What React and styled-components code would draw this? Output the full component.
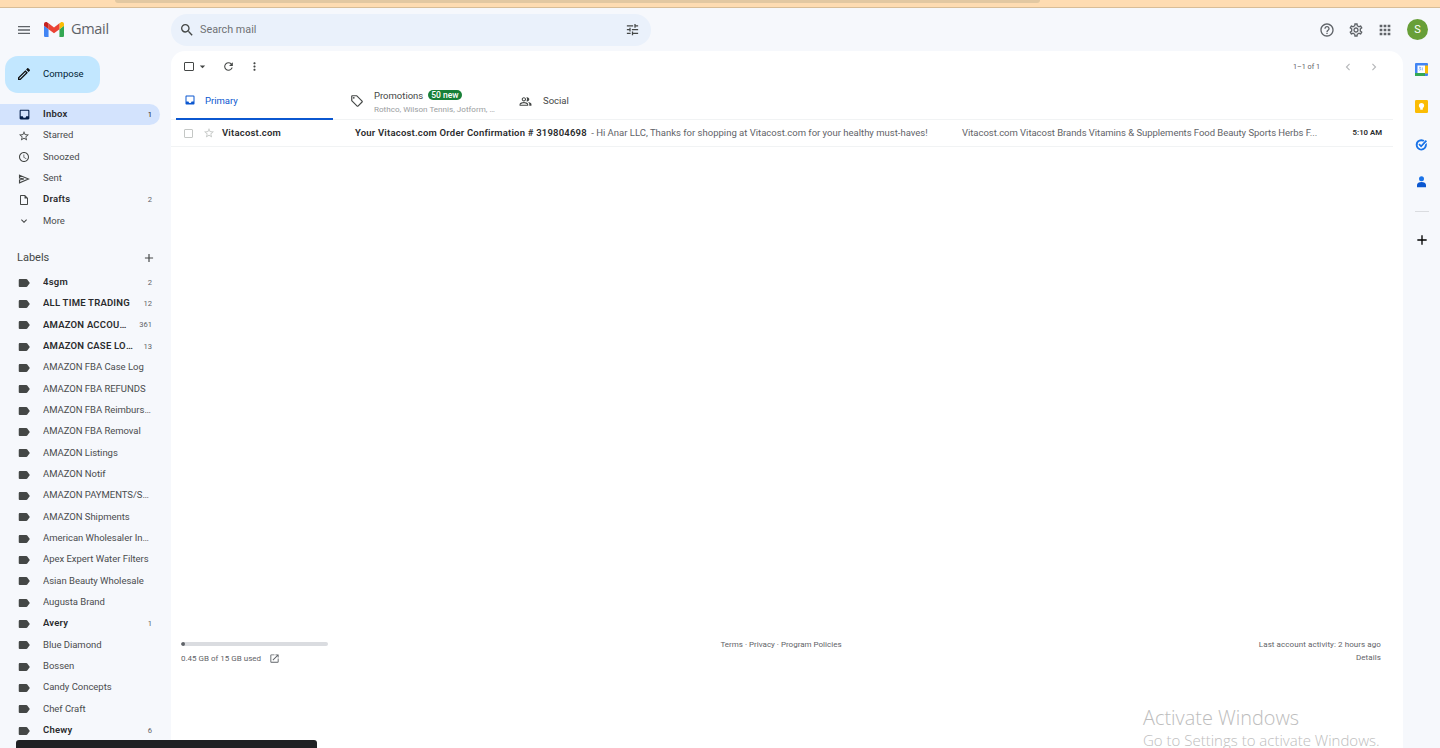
import React from 'react';
import styled, { createGlobalStyle } from 'styled-components';
import {
  MdMenu, MdSearch, MdTune, MdHelpOutline, MdOutlineSettings, MdApps, MdRefresh, MdMoreVert,
  MdStarBorder, MdAccessTime, MdOutlineInsertDriveFile, MdExpandMore, MdLabel, MdAdd, MdOutlineLocalOffer,
  MdOutlinePeopleAlt, MdInbox, MdOpenInNew, MdChevronLeft, MdChevronRight, MdArrowDropDown, MdOutlineEdit,
} from 'react-icons/md';

const Global = createGlobalStyle`
  html, body { margin: 0; padding: 0; height: 100%; overflow: hidden; }
  body { background: #f6f8fc; font-family: Roboto, "Liberation Sans", sans-serif; color: #444746; }
  * { box-sizing: border-box; }
`;

const Page = styled.div`
  position: relative;
  width: 1440px;
  height: 748px;
  display: flex;
  flex-direction: column;
  overflow: hidden;
`;
const BrowserStrip = styled.div`
  height: 8px;
  flex: none;
  background: #fedcb2;
  border-bottom: 1px solid #d8bd97;
  padding: 0 400px 0 115px;
`;
const StripTab = styled.div`
  height: 3px;
  background: #e2c8a2;
  border-radius: 0 0 8px 8px;
`;
const TopBar = styled.header`
  height: 43px;
  flex: none;
  display: flex;
  align-items: center;
`;
const Brand = styled.div`
  width: 171px;
  flex: none;
  display: flex;
  align-items: center;
  padding-left: 16px;
  color: #5f6368;
`;
const LogoGap = styled.span`
  width: 12px;
  flex: none;
`;
const BrandName = styled.span`
  font-family: "Open Sans", Roboto, sans-serif;
  font-size: 14.5px;
  margin-left: 7px;
  margin-top: -2px;
  color: #5f6368;
  letter-spacing: -0.3px;
`;
const SearchBar = styled.div`
  width: 480px;
  height: 32px;
  background: #eaf1fb;
  border-radius: 16px;
  display: flex;
  align-items: center;
  padding: 0 11px 0 8px;
  color: #444746;
`;
const SearchText = styled.span`
  flex: 1;
  font-size: 10.8px;
  margin-left: 5px;
  color: #6f7275;
`;
const TopActions = styled.div`
  margin-left: auto;
  display: flex;
  align-items: center;
  padding-right: 12px;
  color: #5f6368;
`;
const TopIcon = styled.span`
  width: 29px;
  display: flex;
  justify-content: center;
`;
const Avatar = styled.span`
  width: 21px;
  height: 21px;
  margin-left: 8px;
  border-radius: 50%;
  background: #689f38;
  color: #fff;
  font-size: 11px;
  display: flex;
  align-items: center;
  justify-content: center;
`;
const Body = styled.div`
  flex: 1;
  display: flex;
  min-height: 0;
`;
const Sidebar = styled.aside`
  width: 171px;
  flex: none;
  padding-top: 5px;
  overflow: hidden;
`;
const Compose = styled.div`
  width: 95px;
  height: 37px;
  margin-left: 5px;
  margin-bottom: 11px;
  padding: 0 0 2px 11px;
  border-radius: 13px;
  background: #c2e7ff;
  color: #001d35;
  display: flex;
  align-items: center;
  font-size: 9.5px;
  gap: 11px;
`;
const Row = styled.div`
  width: 160px;
  height: 21.33px;
  display: flex;
  align-items: center;
  padding: 0 8px 0 18px;
  font-size: 9.5px;
  border-radius: 0 11px 11px 0;
  background: ${p => (p.$active ? '#d3e3fd' : 'transparent')};
  color: ${p => (p.$bold ? '#2a2b2d' : '#4a4c4e')};
  font-weight: ${p => (p.$bold ? 600 : 400)};
  letter-spacing: ${p => (p.$bold ? '0.22px' : '-0.03px')};
`;
const RowIcon = styled.span`
  width: 25px;
  flex: none;
  display: flex;
  color: ${p => (p.$active ? '#041e49' : '#444746')};
`;
const LabelGlyph = styled(MdLabel)`
  margin-left: -1px;
`;
const RowName = styled.span`
  flex: 1;
  min-width: 0;
  margin-top: -2px;
  overflow: hidden;
  white-space: nowrap;
  text-overflow: ellipsis;
`;
const RowCount = styled.span`
  flex: none;
  margin-left: 8px;
  margin-top: -1px;
  font-size: 7.6px;
  font-weight: 400;
  letter-spacing: 0;
  color: ${p => (p.$active ? '#202124' : '#5f6368')};
`;
const LabelsHead = styled.div`
  width: 160px;
  height: 22px;
  margin-top: 15px;
  margin-bottom: 3px;
  padding: 0 4px 0 17px;
  display: flex;
  align-items: center;
  justify-content: space-between;
  font-size: 11px;
  color: #444746;
`;
const Main = styled.main`
  width: 1232px;
  flex: none;
  background: #fff;
  border-radius: 14px 14px 0 0;
  display: flex;
  flex-direction: column;
`;
const Toolbar = styled.div`
  height: 31px;
  flex: none;
  display: flex;
  align-items: center;
  padding: 0 16px 0 13px;
  color: #444746;
`;
const Check = styled.span`
  display: block;
  flex: none;
  width: ${p => p.$size}px;
  height: ${p => p.$size}px;
  border: ${p => (p.$light ? '1px solid #c4c7c5' : '1.5px solid #444746')};
  border-radius: 1px;
`;
const ToolGroup = styled.span`
  display: flex;
  align-items: center;
  gap: ${p => p.$gap || 0}px;
  width: ${p => p.$w}px;
  flex: none;
`;
const Pager = styled.div`
  margin-left: auto;
  display: flex;
  align-items: center;
  color: #b6b8ba;
`;
const PagerText = styled.span`
  font-size: 7.2px;
  color: #5f6368;
  margin-right: 15px;
`;
const PagerButton = styled.span`
  width: 26px;
  display: flex;
  justify-content: center;
`;
const Tabs = styled.div`
  height: 38px;
  flex: none;
  display: flex;
  margin-right: 10px;
  border-bottom: 1px solid #f1f3f4;
`;
const Tab = styled.div`
  width: ${p => p.$w}px;
  margin-left: ${p => p.$ml || 0}px;
  flex: none;
  height: 38px;
  display: flex;
  align-items: center;
  padding-left: ${p => p.$pl}px;
  font-size: 9.5px;
  color: ${p => (p.$active ? '#0b57d0' : '#444746')};
  border-bottom: ${p => (p.$active ? '2px solid #0b57d0' : 'none')};
`;
const TabLabel = styled.span`
  margin-left: ${p => p.$ml}px;
  margin-top: ${p => (p.$up ? -2 : 0)}px;
`;
const TabStack = styled.div`
  display: flex;
  flex-direction: column;
  margin-left: 10px;
  margin-top: 1px;
  gap: 3px;
`;
const TabTop = styled.div`
  display: flex;
  align-items: center;
  gap: 5px;
`;
const Badge = styled.span`
  background: #188038;
  color: #fff;
  font-size: 8.5px;
  font-weight: 500;
  height: 10px;
  line-height: 10px;
  padding: 0 3px;
  border-radius: 5px;
`;
const TabSub = styled.span`
  font-size: 8.1px;
  color: #9a9da0;
  white-space: nowrap;
`;
const MailRow = styled.div`
  height: 27px;
  flex: none;
  margin-right: 10px;
  display: flex;
  align-items: center;
  border-bottom: 1px solid #f1f3f4;
  padding-left: 13px;
  font-size: 9.5px;
  white-space: nowrap;
  color: #5f6368;
`;
const StarBox = styled.span`
  display: flex;
  margin: 0 7px 0 10px;
  color: #c4c7c5;
`;
const Sender = styled.b`
  width: 133px;
  flex: none;
  margin-top: -2px;
  color: #2a2b2d;
  font-weight: 600;
  letter-spacing: 0.2px;
`;
const Subject = styled.b`
  margin-right: 2px;
  color: #2a2b2d;
  font-weight: 600;
  letter-spacing: 0.2px;
`;
const Snippet = styled.span`
  width: 607px;
  flex: none;
  margin-top: -2px;
`;
const Extra = styled.span`
  flex: 1;
  margin-top: -2px;
  letter-spacing: -0.04px;
`;
const Time = styled.b`
  font-size: 7.8px;
  font-weight: 600;
  margin-top: -2px;
  color: #2a2b2d;
  padding-right: 11px;
`;
const Footer = styled.footer`
  margin-top: auto;
  margin-bottom: 84px;
  display: grid;
  grid-template-columns: 1fr auto 1fr;
  padding: 0 22px 0 10px;
  font-size: 8px;
  color: #5f6368;
`;
const Storage = styled.div`
  width: 147px;
  padding-top: 4px;
`;
const Track = styled.div`
  height: 4px;
  background: #dadce0;
  border-radius: 2px;
  overflow: hidden;
`;
const Fill = styled.div`
  height: 4px;
  background: #5f6368;
  border-radius: 2px;
`;
const StorageText = styled.div`
  margin-top: 7px;
  display: flex;
  align-items: center;
  gap: 8px;
  white-space: nowrap;
`;
const Policies = styled.div`
  padding-top: 2px;
`;
const Activity = styled.div`
  text-align: right;
  line-height: 13px;
  letter-spacing: 0.08px;
`;
const Rail = styled.aside`
  flex: 1;
  display: flex;
  flex-direction: column;
  align-items: center;
`;
const RailItem = styled.span`
  height: 37.3px;
  display: flex;
  align-items: center;
  justify-content: center;
`;
const RailRule = styled.span`
  width: 14px;
  height: 1px;
  background: #dadce0;
  margin: 11px 0 20px;
`;
const Toast = styled.div`
  position: absolute;
  left: 16px;
  bottom: 0;
  width: 301px;
  height: 8px;
  background: #202124;
  border-radius: 3px 3px 0 0;
`;
const Watermark = styled.div`
  position: absolute;
  left: 1143px;
  top: 705px;
  font-family: "Open Sans", sans-serif;
  font-weight: 300;
  color: #bdbdbd;
  white-space: nowrap;
  pointer-events: none;
`;
const WatermarkTitle = styled.div`
  font-size: 19.9px;
  line-height: 26px;
`;
const WatermarkSub = styled.div`
  font-size: 15px;
  line-height: 19px;
`;

const GmailLogo = () => (
  <svg width="20" height="15" viewBox="52 42 88 66">
    <path fill="#4285f4" d="M58 108h14V74L52 59v43c0 3.32 2.69 6 6 6" />
    <path fill="#34a853" d="M120 108h14c3.32 0 6-2.69 6-6V59l-20 15" />
    <path fill="#fbbc04" d="M120 48v26l20-15v-8c0-7.42-8.47-11.65-14.4-7.2" />
    <path fill="#ea4335" d="M72 74V48l24 18 24-18v26L96 92" />
    <path fill="#c5221f" d="M52 51v8l20 15V48l-5.6-4.2c-5.94-4.45-14.4-.22-14.4 7.2" />
  </svg>
);
const SentIcon = () => (
  <svg width="12" height="12" viewBox="0 0 12 12" fill="none" stroke="currentColor" strokeWidth="1.1">
    <path d="M1.5 2.2 10.5 6 1.5 9.8V7L6 6 1.5 5Z" />
  </svg>
);
const CalendarIcon = () => (
  <svg width="13" height="13" viewBox="0 0 13 13">
    <rect width="13" height="13" rx="1" fill="#4285f4" />
    <rect x="10" y="2.5" width="3" height="8" fill="#fbbc04" />
    <rect y="10" width="10" height="3" fill="#34a853" />
    <rect x="2.5" y="2.5" width="7.5" height="7.5" fill="#fff" />
    <path d="M4 4.3h1.6L4.8 5.6c.7 0 .9.4.9.8 0 .5-.4.8-.9.8-.4 0-.7-.2-.9-.5M7.3 4.4v3" fill="none" stroke="#4285f4" strokeWidth=".6" />
  </svg>
);
const KeepIcon = () => (
  <svg width="13" height="13" viewBox="0 0 13 13">
    <rect width="13" height="13" rx="1.2" fill="#fbbc04" />
    <circle cx="6.5" cy="5.5" r="2.6" fill="#fff" />
    <rect x="5.2" y="7.5" width="2.6" height="2.2" fill="#fff" />
  </svg>
);
const TasksIcon = () => (
  <svg width="13" height="13" viewBox="0 0 13 13" fill="none">
    <circle cx="6.3" cy="6.8" r="4.6" stroke="#1a73e8" strokeWidth="2" />
    <path d="M3.8 6.3 6 8.6 12 2.2" stroke="#fff" strokeWidth="3.4" />
    <path d="M4 6.2 6.1 8.3 11.4 2.6" stroke="#1a73e8" strokeWidth="1.8" />
  </svg>
);
const ContactsIcon = () => (
  <svg width="11" height="12" viewBox="0 0 11 12">
    <circle cx="5.5" cy="2.8" r="2.5" fill="#1a73e8" />
    <path d="M1 9c0-2 2-3 4.5-3S10 7 10 9v2.2H1Z" fill="#0b57d0" />
  </svg>
);

const nav = [
  { name: 'Starred', Icon: MdStarBorder },
  { name: 'Snoozed', Icon: MdAccessTime },
  { name: 'Sent', Icon: SentIcon },
  { name: 'Drafts', Icon: MdOutlineInsertDriveFile, count: 2, bold: true },
  { name: 'More', Icon: MdExpandMore },
];
const labels = [
  ['4sgm', 2, 1], ['ALL TIME TRADING', 12, 1], ['AMAZON ACCOUNT HEALTH', 361, 1], ['AMAZON CASE LOG FILES', 13, 1],
  ['AMAZON FBA Case Log'], ['AMAZON FBA REFUNDS'], ['AMAZON FBA Reimbursements'], ['AMAZON FBA Removal'],
  ['AMAZON Listings'], ['AMAZON Notif'], ['AMAZON PAYMENTS/SETTLEMENTS'], ['AMAZON Shipments'],
  ['American Wholesaler Inc LLC'], ['Apex Expert Water Filters'], ['Asian Beauty Wholesale'], ['Augusta Brand'],
  ['Avery', 1, 1], ['Blue Diamond'], ['Bossen'], ['Candy Concepts'], ['Chef Craft'], ['Chewy', 6, 1],
];

export default function App() {
  return (
    <Page>
      <Global />
      <BrowserStrip><StripTab /></BrowserStrip>
      <TopBar>
        <Brand>
          <MdMenu size={16} />
          <LogoGap />
          <GmailLogo />
          <BrandName>Gmail</BrandName>
        </Brand>
        <SearchBar>
          <MdSearch size={16} />
          <SearchText>Search mail</SearchText>
          <MdTune size={15} />
        </SearchBar>
        <TopActions>
          <TopIcon><MdHelpOutline size={16} /></TopIcon>
          <TopIcon><MdOutlineSettings size={16} /></TopIcon>
          <TopIcon><MdApps size={16} /></TopIcon>
          <Avatar>S</Avatar>
        </TopActions>
      </TopBar>
      <Body>
        <Sidebar>
          <Compose><MdOutlineEdit size={16} color="#111" />Compose</Compose>
          <Row $active $bold>
            <RowIcon $active><MdInbox size={13} /></RowIcon>
            <RowName>Inbox</RowName>
            <RowCount $active>1</RowCount>
          </Row>
          {nav.map(({ name, Icon, count, bold }) => (
            <Row key={name} $bold={bold}>
              <RowIcon><Icon size={12} /></RowIcon>
              <RowName>{name}</RowName>
              {count && <RowCount>{count}</RowCount>}
            </Row>
          ))}
          <LabelsHead>Labels<MdAdd size={14} /></LabelsHead>
          {labels.map(([name, count, bold]) => (
            <Row key={name} $bold={bold}>
              <RowIcon><LabelGlyph size={14} /></RowIcon>
              <RowName>{name}</RowName>
              {count && <RowCount>{count}</RowCount>}
            </Row>
          ))}
        </Sidebar>
        <Main>
          <Toolbar>
            <ToolGroup $w={38} $gap={2}><Check $size={9.5} /><MdArrowDropDown size={13} /></ToolGroup>
            <ToolGroup $w={26}><MdRefresh size={13} /></ToolGroup>
            <ToolGroup $w={20}><MdMoreVert size={13} /></ToolGroup>
            <Pager>
              <PagerText>1–1 of 1</PagerText>
              <PagerButton><MdChevronLeft size={14} /></PagerButton>
              <PagerButton><MdChevronRight size={14} /></PagerButton>
            </Pager>
          </Toolbar>
          <Tabs>
            <Tab $active $w={157} $ml={5} $pl={8}>
              <MdInbox size={12} />
              <TabLabel $ml={9}>Primary</TabLabel>
            </Tab>
            <Tab $w={170} $pl={17}>
              <MdOutlineLocalOffer size={14} />
              <TabStack>
                <TabTop>Promotions<Badge>50 new</Badge></TabTop>
                <TabSub>Rothco, Wilson Tennis, Jotform, …</TabSub>
              </TabStack>
            </Tab>
            <Tab $w={200} $pl={16}>
              <MdOutlinePeopleAlt size={13} />
              <TabLabel $ml={11} $up>Social</TabLabel>
            </Tab>
          </Tabs>
          <MailRow>
            <Check $size={9} $light />
            <StarBox><MdStarBorder size={12} /></StarBox>
            <Sender>Vitacost.com</Sender>
            <Snippet><Subject>Your Vitacost.com Order Confirmation # 319804698</Subject> - Hi Anar LLC, Thanks for shopping at Vitacost.com for your healthy must-haves!</Snippet>
            <Extra>Vitacost.com Vitacost Brands Vitamins &amp; Supplements Food Beauty Sports Herbs F...</Extra>
            <Time>5:10 AM</Time>
          </MailRow>
          <Footer>
            <Storage>
              <Track><Fill style={{ width: `${(0.45 / 15) * 100}%` }} /></Track>
              <StorageText>0.45 GB of 15 GB used <MdOpenInNew size={11} /></StorageText>
            </Storage>
            <Policies>Terms · Privacy · Program Policies</Policies>
            <Activity>Last account activity: 2 hours ago<br />Details</Activity>
          </Footer>
        </Main>
        <Rail>
          <RailItem><CalendarIcon /></RailItem>
          <RailItem><KeepIcon /></RailItem>
          <RailItem><TasksIcon /></RailItem>
          <RailItem><ContactsIcon /></RailItem>
          <RailRule />
          <MdAdd size={16} color="#000" />
        </Rail>
      </Body>
      <Toast />
      <Watermark>
        <WatermarkTitle>Activate Windows</WatermarkTitle>
        <WatermarkSub>Go to Settings to activate Windows.</WatermarkSub>
      </Watermark>
    </Page>
  );
}
